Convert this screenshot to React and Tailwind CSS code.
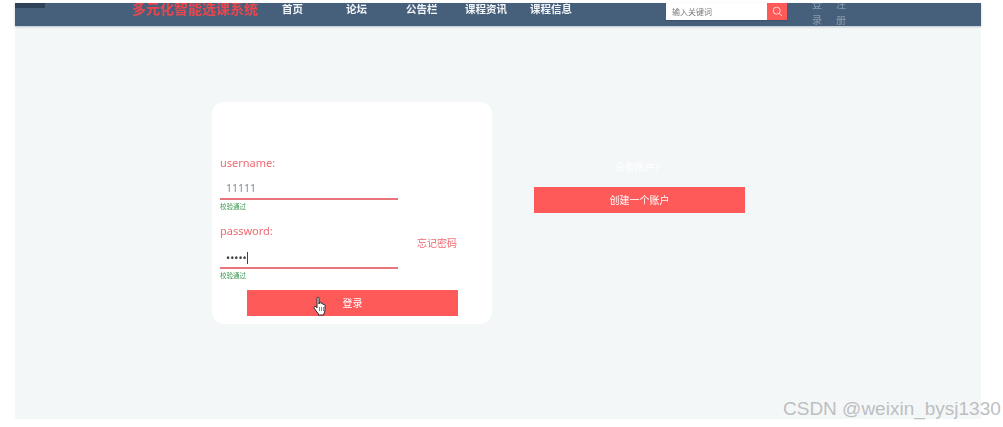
const font = { fontFamily: '"Noto Sans", "Noto Sans CJK SC", sans-serif' };

function NavItem({ children, className }) {
  return <span className={"font-bold text-[10.5px] leading-none text-[#f4f6f8] whitespace-nowrap " + className}>{children}</span>;
}

function Hand() {
  return (
    <svg className="absolute left-[66px] top-[6px]" width="15" height="21" viewBox="0 0 15 21">
      <path d="M4 2.2c0-1.4 2-1.4 2 0V8l.3-1.2c.4-1 1.8-.8 1.9.3l.1.6c.3-.9 1.7-.8 1.9.3v.8c.4-.8 1.7-.6 1.8.5v4.5c0 1.6-.6 3-1.3 4.4V19H5.3v-1.2C3.8 16 2.300 14 1.200 12.200c-.8-1.300.7-2.500 1.800-1.300l1 1.100z" fill="#fff" stroke="#2a2a2a" strokeWidth="1" strokeLinejoin="round" />
      <path d="M6.500 11v4M8.500 11v4M10.500 11v4" stroke="#555" strokeWidth=".7" />
    </svg>
  );
}

function Field({ label, children, height }) {
  return (
    <div className="w-[178px]">
      <div className="text-[11px] leading-[16px] text-[#ee6a72]">{label}</div>
      <div className={"border-b-2 border-[#e8747c] pl-[6px] pt-[9px] flex items-center " + height}>{children}</div>
      <div className="text-[6.500px] leading-[8px] mt-[3px] text-[#3f9a55]">校验通过</div>
    </div>
  );
}

export default function App() {
  return (
    <div style={font} className="relative h-[427px] w-[1003px] bg-white overflow-hidden">
      <div className="ml-[15px] mt-[3px] w-[966px] h-[416px] bg-[#f4f7f8] blur-[0.5px] flex flex-col">
        <header className="h-[23px] shrink-0 bg-[#46607c] shadow-[0_1px_2px_rgba(70,96,124,0.35)] flex items-start relative overflow-hidden">
          <div className="w-[30px] h-[5px] bg-[#2f4258] shrink-0" />
          <div className="ml-[87px] -mt-[1px] w-[127px] text-[14px] leading-[14px] font-bold text-[#e8474e] whitespace-nowrap">多元化智能选课系统</div>
          <div className="flex ml-[23px] mt-[1px]">
            <NavItem className="w-[64px]">首页</NavItem>
            <NavItem className="w-[60px]">论坛</NavItem>
            <NavItem className="w-[59px]">公告栏</NavItem>
            <NavItem className="w-[65px]">课程资讯</NavItem>
            <NavItem className="w-[136px]">课程信息</NavItem>
          </div>
          <div className="flex h-[17px] shrink-0 shadow-[0_1px_1px_rgba(0,0,0,0.15)]">
            <div className="w-[101px] bg-white pl-[6px] text-[8px] leading-[17px] text-[#777]">输入关键词</div>
            <div className="w-[20px] bg-[#ff5a5a] flex items-center justify-center">
              <svg width="11" height="11" viewBox="0 0 11 11" fill="none" stroke="#ffd5d5" strokeWidth="1">
                <circle cx="4.700" cy="4.700" r="3.500" />
                <path d="M7.300 7.300 10 10" />
              </svg>
            </div>
          </div>
          <div className="flex ml-[25px] -mt-[7px] gap-[14px] text-[10px] leading-[16px] text-[#8f9bab]">
            <span className="w-[10px]">登录</span>
            <span className="w-[10px]">注册</span>
          </div>
        </header>
        <main className="flex items-start pl-[197px] pt-[76px]">
          <section className="relative w-[280px] h-[222px] bg-white rounded-[12px] pl-[8px] pt-[53px]">
            <Field label="username:" height="h-[29px]"><span className="text-[10.500px] text-[#858d94]">11111</span></Field>
            <div className="mt-[12px] flex items-start">
              <Field label="password:" height="h-[30px]">
                <span className="text-[11px] leading-none text-[#3c4248]">•••••</span>
                <span className="w-px h-[12px] bg-[#3c4248]" />
              </Field>
              <span className="ml-[19px] mt-[14px] text-[10px] leading-[12px] text-[#ee6a72]">忘记密码</span>
            </div>
            <button className="relative block ml-[27px] mt-[10px] w-[211px] h-[26px] bg-[#ff5a5a] text-white text-[10px]">
              登录
              <Hand />
            </button>
          </section>
          <section className="ml-[42px] w-[211px] pt-[59px]">
            <div className="text-center text-[10px] leading-[12px] text-white">没有账户？</div>
            <button className="block mt-[14px] w-[211px] h-[26px] bg-[#ff5a5a] text-white text-[10px]">创建一个账户</button>
          </section>
        </main>
      </div>
      <div className="absolute left-[783px] top-[398px] text-[19px] leading-[22px] text-[#bcbfc1] whitespace-nowrap" style={{ fontFamily: '"Liberation Sans", sans-serif' }}>CSDN @weixin_bysj1330</div>
    </div>
  );
}
